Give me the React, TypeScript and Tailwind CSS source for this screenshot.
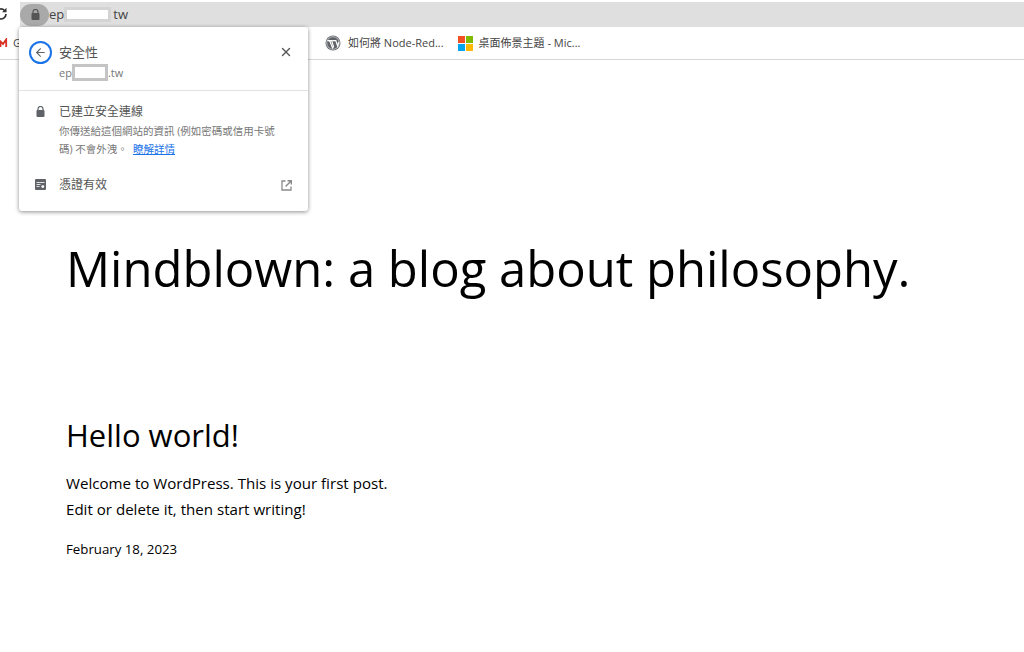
import { X, ArrowLeft } from "lucide-react"

const cjk = "font-['Open_Sans','Noto_Sans_CJK_TC',sans-serif]"

const LockIcon = ({ className }: { className: string }) => (
  <svg width="9" height="11" viewBox="0 0 9 11" className={className}>
    <path d="M2 4.5V3a2.5 2.5 0 0 1 5 0v1.5" fill="none" stroke="currentColor" strokeWidth="1.2" />
    <rect x="0.5" y="4" width="8" height="7" rx="1" fill="currentColor" />
  </svg>
)

const ReloadIcon = () => (
  <svg width="14" height="14" viewBox="0 0 14 14" className="ml-[-6px] shrink-0 text-[#333]">
    <path d="M12 7a5 5 0 1 1-1.6-3.7" fill="none" stroke="currentColor" strokeWidth="1.7" />
    <path d="M12.5 0.8v4.4H8.1z" fill="currentColor" />
  </svg>
)

const GmailIcon = () => (
  <svg width="8" height="10" viewBox="0 0 8 10" className="shrink-0">
    <path d="M0.5 9V3.5L3 6l3.2-4.6V9" fill="none" stroke="#d93025" strokeWidth="1.8" />
  </svg>
)

const WpIcon = () => (
  <svg width="16" height="16" viewBox="0 0 16 16" className="shrink-0">
    <circle cx="8" cy="8" r="7.5" fill="#5f6368" />
    <circle cx="8" cy="8" r="6.3" fill="none" stroke="#fff" strokeWidth="0.6" />
    <path d="M3.6 5.6h3l1.9 6-1 1.3L4.9 6.4zM7.4 5.6h3.4l1.9 5.6 1-4" fill="none" stroke="#fff" strokeWidth="1.2" />
  </svg>
)

const MsIcon = () => (
  <div className="grid h-[15px] w-[15px] shrink-0 grid-cols-2 gap-px">
    <div className="bg-[#f25022]" />
    <div className="bg-[#7fba00]" />
    <div className="bg-[#00a4ef]" />
    <div className="bg-[#ffb900]" />
  </div>
)

const CertIcon = () => (
  <svg width="11" height="11" viewBox="0 0 11 11" className="shrink-0">
    <rect width="11" height="11" rx="1" fill="#5f6368" />
    <path d="M1.5 3.5h8M1.5 5.5h4M1.5 7.5h3" stroke="#fff" strokeWidth="0.8" />
    <circle cx="7.8" cy="7.6" r="1.4" fill="#fff" />
  </svg>
)

const OpenIcon = () => (
  <svg width="11" height="11" viewBox="0 0 11 11" className="ml-auto mr-[16px] mt-[4px] shrink-0">
    <path d="M4.5 1H1v9h9V6.5" fill="none" stroke="#8a8a8a" strokeWidth="1.3" />
    <path d="M6.5 0.7h3.8v3.8M10 1 4.6 6.4" fill="none" stroke="#8a8a8a" strokeWidth="1.4" />
  </svg>
)

const Mask = ({ className }: { className: string }) => (
  <span className={`inline-block border-[3px] bg-white ${className}`} />
)

export default function App() {
  return (
    <div lang="zh-TW" className={`relative h-[652px] w-[1024px] overflow-hidden bg-white text-black ${cjk}`}>
      {/* toolbar */}
      <div className="flex h-[27px] items-end bg-white">
        <div className="flex h-[26px] items-center">
          <ReloadIcon />
        </div>
        <div className="ml-[12px] flex h-[25px] flex-1 items-center bg-[#dfdfdf]">
          <div className="flex h-[22px] w-[29px] items-center justify-center rounded-full bg-[#a9a9a9]">
            <LockIcon className="ml-[1px] text-[#555]" />
          </div>
          <span className="text-[13px] text-[#444]">ep</span>
          <Mask className="h-[15px] w-[47px] border-[#d4d4d4]" />
          <span className="ml-[2px] text-[13px] text-[#444]">tw</span>
        </div>
      </div>

      {/* bookmarks */}
      <div className="flex h-[33px] items-center border-b border-[#d8d8d8] text-[11px] text-[#444]">
        <GmailIcon />
        <span className="ml-[5px]">G</span>
        <div className="ml-[304px] flex items-center gap-[7px]">
          <WpIcon />
          <span>如何將 Node-Red...</span>
        </div>
        <div className="ml-[14px] flex items-center gap-[6px]">
          <MsIcon />
          <span>桌面佈景主題 - Mic...</span>
        </div>
      </div>

      {/* page */}
      <main className="pl-[66px] font-['Open_Sans',sans-serif]">
        <h1 className="mt-[172px] text-[49px] leading-[72px] whitespace-nowrap">Mindblown: a blog about philosophy.</h1>
        <h2 className="mt-[110px] text-[31px] leading-[42px]">Hello world!</h2>
        <p className="mt-[14px] text-[15.1px] leading-[26px]">Welcome to WordPress. This is your first post.</p>
        <p className="text-[15.1px] leading-[26px]">Edit or delete it, then start writing!</p>
        <p className="mt-[17px] text-[13.25px] leading-[20px]">February 18, 2023</p>
      </main>

      {/* security popup */}
      <div className="absolute left-[19px] top-[27px] w-[289px] rounded-[3px] bg-white shadow-[0_1px_4px_rgba(0,0,0,0.45)]">
        <div className="flex h-[64px] border-b border-[#e2e2e2]">
          <div className="ml-[10px] mt-[14px] flex h-[23px] w-[23px] items-center justify-center rounded-full border-2 border-[#1a73e8]">
            <ArrowLeft size={13} className="text-[#5f6368]" />
          </div>
          <div className="ml-[7px] mt-[15px]">
            <div className="text-[13px] leading-[20px] text-[#555]">安全性</div>
            <div className="mt-[2px] flex items-center text-[11px] leading-[14px] text-[#777]">
              ep
              <Mask className="h-[17px] w-[36px] border-[#c4c4c4]" />
              .tw
            </div>
          </div>
          <X size={14} strokeWidth={2.4} className="ml-auto mr-[15px] mt-[18px] text-[#555]" />
        </div>
        <div className="flex pt-[12px]">
          <div className="flex w-[40px] justify-center pt-[3px] pl-[3px]">
            <LockIcon className="text-[#5f6368]" />
          </div>
          <div className="w-[226px]">
            <div className="text-[12px] leading-[18px] text-[#555]">已建立安全連線</div>
            <div className="mt-[1px] text-[10.5px] leading-[18px] whitespace-nowrap text-[#777]">你傳送給這個網站的資訊 (例如密碼或信用卡號</div>
            <div className="flex text-[10.5px] leading-[18px] text-[#777]">
              <span className="w-[74px] whitespace-nowrap">碼) 不會外洩。</span>
              <span className="text-[#1a73e8] underline">瞭解詳情</span>
            </div>
          </div>
        </div>
        <div className="flex h-[53px] items-start pt-[18px]">
          <div className="flex w-[40px] justify-center pl-[3px] pt-[3px]">
            <CertIcon />
          </div>
          <span className="text-[12px] leading-[18px] text-[#555]">憑證有效</span>
          <OpenIcon />
        </div>
      </div>
    </div>
  )
}
